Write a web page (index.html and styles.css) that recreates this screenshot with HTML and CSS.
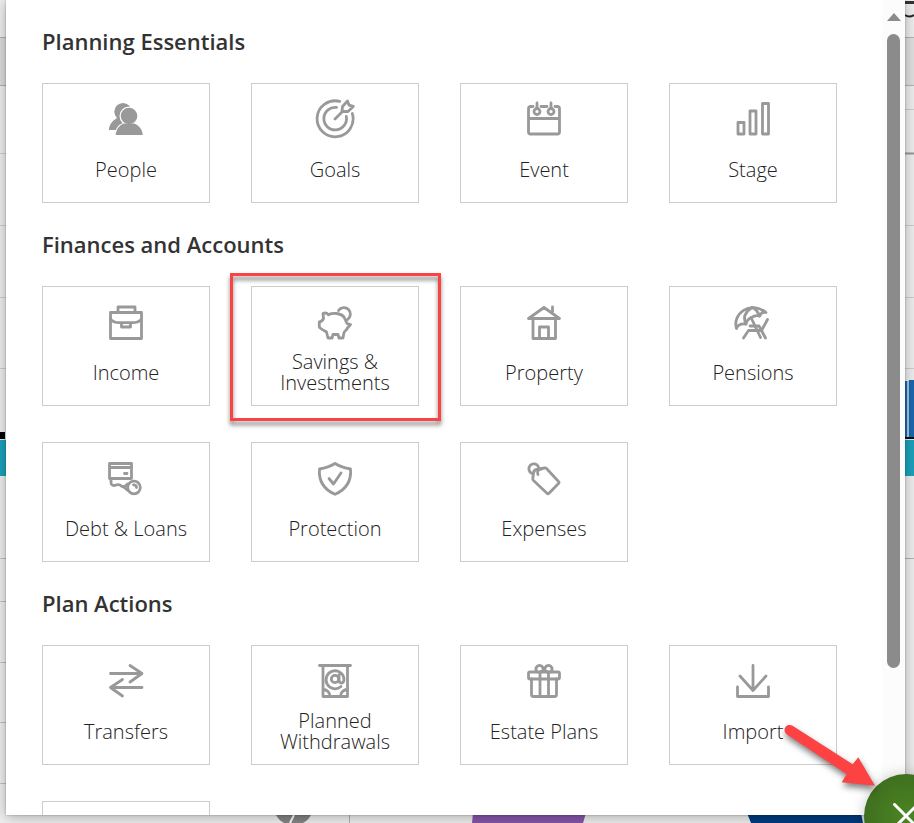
FILE: index.html
```html
<!DOCTYPE html>
<html lang="en">
<head>
  <meta charset="UTF-8">
  <title>Add to plan</title>
  <link rel="stylesheet" href="styles.css">
</head>
<body>

<!-- chart page behind the menu -->
<div class="backdrop" aria-hidden="true">
  <svg class="edge-left" width="10" height="823">
    <rect y="38" width="10" height="47" fill="#dedede"/>
    <path d="M0 37.5h10M0 85.5h10" stroke="#b0b0b0"/>
    <path d="M0 153.5h10M0 225.5h10M0 297.5h10M0 368.5h10" stroke="#cfcfcf"/>
    <path d="M0 558.5h10M0 601.5h10M0 662.5h10M0 722.5h10M0 783.5h10" stroke="#c2c2c2"/>
    <rect y="432" width="5" height="7" fill="#000"/>
    <rect y="440" width="10" height="36" fill="#1ba3bd"/>
  </svg>
  <svg class="edge-right" width="12" height="823">
    <rect x="3" y="1" width="9" height="3" fill="#333"/>
    <path d="M3 15q4 3 9 0" fill="none" stroke="#222" stroke-width="2"/>
    <rect y="38" width="12" height="47" fill="#e2e2e2"/>
    <path d="M0 37.5h12M0 85.5h12" stroke="#b5b5b5"/>
    <path d="M0 109.5h12M0 225.5h12M0 297.5h12M0 368.5h12" stroke="#cfcfcf"/>
    <path d="M0 153.5h12" stroke="#999" stroke-width="2"/>
    <path d="M0 558.5h12" stroke="#b5b5b5"/>
    <rect x="3" y="381" width="2" height="56" fill="#1a68b0"/>
    <rect x="5" y="381" width="2" height="56" fill="#a9c8e2"/>
    <rect x="7" y="380" width="5" height="57" fill="#1a68b0"/>
    <rect y="437" width="12" height="2" fill="#001018"/>
    <rect y="440" width="12" height="36" fill="#1ba3bd"/>
  </svg>
  <svg class="edge-bottom" width="914" height="10">
    <path d="M275 0h37q-3 7-9 10h-19q-6-3-9-10z" fill="#858585"/>
    <path d="M294 2l-4 8" stroke="#fff" stroke-width="2"/>
    <path d="M349.5 0v10" stroke="#b0b0b0"/>
    <path d="M473 0h113l-3 10H472z" fill="#8655ab"/>
    <path d="M747 0h114l2 10H751z" fill="#003c80"/>
  </svg>
</div>

<div class="panel">
  <main class="content">
    <section>
      <h2>Planning Essentials</h2>
      <div class="tiles">
        <button class="tile" type="button">
          <svg class="icon solid" viewBox="0 0 40 40">
            <path d="M3 31c0-5 3-9 8-12a8.700 8.700 0 1 1 12 0l2 12z"/>
            <circle class="cut" cx="23" cy="17" r="8.500"/>
            <path class="cut" d="M9 36.500c1-6 4-10 9-12h10c5 2 8 6 9 12z"/>
            <circle cx="23" cy="17" r="8.300"/>
            <path d="M9.700 36c.5-6 3.500-9.500 8-11.500h10.600c4.500 2 8 5.500 8.400 11.500z"/>
          </svg>
          <span class="label">People</span>
        </button>
        <button class="tile" type="button">
          <svg class="icon" viewBox="0 0 40 40">
            <path d="M24.700 2.400A18 18 0 1 0 37.300 14.500"/>
            <path d="M21.500 8.400A11.300 11.300 0 1 0 31.300 17.500"/>
            <path d="M20 20l8-8M27 12.500l.5-5L32.500 2l1.500 4.200 4.300 1.200-5.300 5.100z"/>
          </svg>
          <span class="label">Goals</span>
        </button>
        <button class="tile" type="button">
          <svg class="icon" viewBox="0 0 40 40">
            <path d="M9 7.500H6.500a2 2 0 0 0-2 2V33a2 2 0 0 0 2 2h27a2 2 0 0 0 2-2V9.500a2 2 0 0 0-2-2H31M17 7.500h6M4.500 19.500h31"/>
            <path d="M13 4v5.500M27 4v5.500"/>
            <circle cx="13" cy="12.500" r="3"/>
            <circle cx="27" cy="12.500" r="3"/>
          </svg>
          <span class="label">Event</span>
        </button>
        <button class="tile" type="button">
          <svg class="icon" viewBox="0 0 40 40">
            <path d="M5 23.500h6V35H5zM17 12h6v23h-6zM29.500 4.500h6V35h-6z"/>
          </svg>
          <span class="label">Stage</span>
        </button>
      </div>
    </section>

    <section>
      <h2>Finances and Accounts</h2>
      <div class="tiles">
        <button class="tile" type="button">
          <svg class="icon" viewBox="0 0 40 40">
            <path d="M4.500 10.500h31v26h-31zM12 10V5h17v5"/>
            <path d="M4.500 17c2 3 5 3.700 9 3.700h13c4 0 7-.7 9-3.700M15.500 21v4h9v-4"/>
          </svg>
          <span class="label">Income</span>
        </button>
        <button class="tile" type="button">
          <svg class="icon" viewBox="0 0 40 40">
            <path d="M8 11.500c2-1 4-.5 5.500 1.200 4-2 12-2 15.500 2.300l3 6.500 3.500 1-3 3.500c-1 2-2.500 3-3.500 4.500l-1 5.500h-4l-1-3.500h-5L17 36h-4l-1.500-6C9 28.500 5 26.500 4.300 25v-5c2-.3 3.200-1.500 4.200-3.500z"/>
            <path d="M23.500 8.500A6.500 6.500 0 1 1 32.500 17.500"/>
          </svg>
          <span class="label">Savings &amp; Investments</span>
          <span class="highlight"></span>
        </button>
        <button class="tile" type="button">
          <svg class="icon" viewBox="0 0 40 40">
            <path d="M4.500 16.500L20 5.500l15.500 11zM9 17v19.500h22.500V17M15.500 36V25h9v11M28.500 5v5"/>
          </svg>
          <span class="label">Property</span>
        </button>
        <button class="tile" type="button">
          <svg class="icon" viewBox="0 0 40 40">
            <path d="M3.500 26.500C-1 12 17-2 33 10.500c-3-1-5 .5-6.500 3.500-3-1-6 0-8 1.500-2.500 1-5 3.500-5.500 6.500-4-.5-8 0-9.500 4.500z"/>
            <path d="M13 22c-3-6-1-12 6-16.500M26.500 14c-2-5-4-8-7.500-8.500M18 15.500l9.500 20"/>
            <path d="M34.500 17.500l-6 11H15.500L10.500 36M17 24h9l6.500 12"/>
          </svg>
          <span class="label">Pensions</span>
        </button>
        <button class="tile" type="button">
          <svg class="icon" viewBox="0 0 40 40">
            <path d="M3.500 5.500h22v15h-22zM4 9.500h21M18.500 15.500h2.500"/>
            <path d="M5 21v3.500c0 3 2.500 3.500 5 2.500s4-.5 6 1.500h3"/>
            <path d="M21.500 26l-3.500 3.300 3.500 3"/>
            <circle cx="28" cy="29.500" r="6.300"/>
            <path d="M27.500 26.800c2 0 3 1 3 2.700"/>
          </svg>
          <span class="label">Debt &amp; Loans</span>
        </button>
        <button class="tile" type="button">
          <svg class="icon" viewBox="0 0 40 40">
            <path d="M20 5.500c4 2.500 9 4.500 15.500 5.500 1 12-4.500 20.500-15.500 25.300C9 31.500 3.500 23 4.500 11 11 10 16 8 20 5.500z"/>
            <path d="M14 20.500l4.500 5.500 7.500-11"/>
          </svg>
          <span class="label">Protection</span>
        </button>
        <button class="tile" type="button">
          <svg class="icon" viewBox="0 0 40 40">
            <path d="M12.500 11.500l8-1.500c1-.2 1.500 0 2 .5l12 13c.7.700.7 1.300 0 2L25 35.300c-.7.7-1.300.7-2 0L9.500 22.500c-.6-.6-.8-1.200-.7-2l.7-5.500c.3-2.200 1-3.200 3-3.500z"/>
            <path d="M8 15.500A5 5 0 1 1 14.500 9M14 16.500c-1.500-3 .5-5.500 3.500-5.500"/>
          </svg>
          <span class="label">Expenses</span>
        </button>
      </div>
    </section>

    <section>
      <h2>Plan Actions</h2>
      <div class="tiles">
        <button class="tile" type="button">
          <svg class="icon" viewBox="0 0 40 40">
            <path d="M4.500 12.500h31M24 4.500l12 8-12 8.500M36 26.500H4.500M16.500 18.500l-12 8 12 8.500"/>
          </svg>
          <span class="label">Transfers</span>
        </button>
        <button class="tile" type="button">
          <svg class="icon" viewBox="0 0 40 40">
            <path d="M4.500 4.500h31M8 5v30.500h24.500V5M8 28.500c4 0 7 3 7 7M32.500 28.500c-4 0-7 3-7 7"/>
            <path d="M26 25.500A9 9 0 1 1 29 18c0 2.500-.5 4-2.500 4S24 20.500 24 18.500V14"/>
            <circle cx="20" cy="18" r="3.700"/>
          </svg>
          <span class="label">Planned Withdrawals</span>
        </button>
        <button class="tile" type="button">
          <svg class="icon" viewBox="0 0 40 40">
            <rect x="4.500" y="11" width="31" height="7" rx="1.500"/>
            <path d="M7.500 18v15.500a2 2 0 0 0 2 2h21a2 2 0 0 0 2-2V18M16 11v24M24.500 11v24"/>
            <path d="M13 11c-3-4 1-8 4.500-6L20 8l2.500-3c3.500-2 7.500 2 4.500 6M20 8l-3 3M20 8l3 3"/>
          </svg>
          <span class="label">Estate Plans</span>
        </button>
        <button class="tile" type="button">
          <svg class="icon" viewBox="0 0 40 40">
            <path d="M20 4.500v25M7 15l13 14.500L33 15M4.500 26v9.500h31V26"/>
          </svg>
          <span class="label">Import</span>
        </button>
        <div class="tile"></div>
      </div>
    </section>
  </main>

  <div class="scrollbar" aria-hidden="true">
    <div class="scroll-up"></div>
    <div class="scroll-thumb"></div>
  </div>
</div>

<button class="close" type="button" aria-label="Close">
  <svg width="26" height="26" viewBox="0 0 26 26">
    <path d="M1.500 1.500l23 23M24.500 1.500l-23 23"/>
  </svg>
</button>

<svg class="pointer" width="96" height="64" viewBox="0 0 96 64" aria-hidden="true">
  <path d="M12.500 2.700L72.700 41.300 78.300 34.300 95 62.700 61.700 59.300 66.700 51.300 7 11.500A5 5 0 0 1 12.500 2.700z"/>
</svg>

</body>
</html>
```
FILE: styles.css
```css
* {
  box-sizing: border-box;
}

html, body {
  margin: 0;
  height: 100%;
  overflow: hidden;
}

body {
  position: relative;
  padding: 0 9px 8px 6px;
  background: #f0f0f0;
  color: #333;
  font-family: "Open Sans", "Noto Sans", sans-serif;
}

.backdrop svg {
  position: absolute;
}

.edge-left {
  top: 0;
  left: 0;
}

.edge-right {
  top: 0;
  right: 0;
}

.edge-bottom {
  bottom: 0;
  left: 0;
}

.panel {
  position: relative;
  display: flex;
  height: 100%;
  background: #fff;
  box-shadow: 0 0 2px rgba(0,0,0,0.3), 0 2px 14px rgba(0,0,0,0.3);
  overflow: hidden;
}

.content {
  flex: 1;
  padding: 0 45px 0 36px;
}

h2 {
  margin: 0;
  padding: 26px 0 27px;
  font-size: 22px;
  font-weight: 600;
  line-height: 30px;
}

.tiles {
  display: grid;
  grid-template-columns: repeat(4, 1fr);
  gap: 36px 41px;
}

.tile {
  position: relative;
  display: flex;
  flex-direction: column;
  align-items: center;
  height: 120px;
  padding: 15px 20px 0;
  border: 1px solid #ccc;
  background: #fff;
  color: #222;
  font: 300 20px/21px "Open Sans", "Noto Sans", sans-serif;
  cursor: pointer;
}

.icon {
  flex: none;
  width: 40px;
  height: 40px;
  fill: none;
  stroke: #999;
  stroke-width: 2.8;
  stroke-linecap: round;
  stroke-linejoin: round;
}

.icon.solid {
  fill: #999;
  stroke: none;
}

.icon .cut {
  fill: #fff;
  stroke: #fff;
  stroke-width: 2;
}

.label {
  display: flex;
  align-items: center;
  height: 60px;
  text-align: center;
}

.highlight {
  position: absolute;
  inset: -14px -23px -16px -22px;
  border: 3px solid #fc4243;
  filter: drop-shadow(0 4px 2px rgba(0,0,0,0.5));
  pointer-events: none;
}

.scrollbar {
  display: flex;
  flex-direction: column;
  align-items: center;
  width: 23px;
  padding-top: 13px;
  background: #fcfcfc;
}

.scroll-up {
  border: 7px solid transparent;
  border-top: 0;
  border-bottom: 8px solid #8b8b8b;
}

.scroll-thumb {
  width: 13px;
  height: 79%;
  margin-top: 13px;
  border-radius: 7px;
  background: #8b8b8b;
}

.close {
  position: absolute;
  right: -34px;
  bottom: -35px;
  display: flex;
  align-items: center;
  justify-content: center;
  width: 84px;
  height: 84px;
  padding: 0;
  border: 0;
  border-radius: 50%;
  background: radial-gradient(circle, #4a8522, #3b661e);
  box-shadow: 0 0 14px rgba(0,0,0,0.2);
  cursor: pointer;
}

.close svg {
  fill: none;
  stroke: #fff;
  stroke-width: 3;
  stroke-linecap: round;
}

.pointer {
  position: absolute;
  right: 38px;
  bottom: 36px;
  overflow: visible;
  fill: #fc4243;
  filter: drop-shadow(1px 4px 3px rgba(0,0,0,0.5));
  pointer-events: none;
}
```
